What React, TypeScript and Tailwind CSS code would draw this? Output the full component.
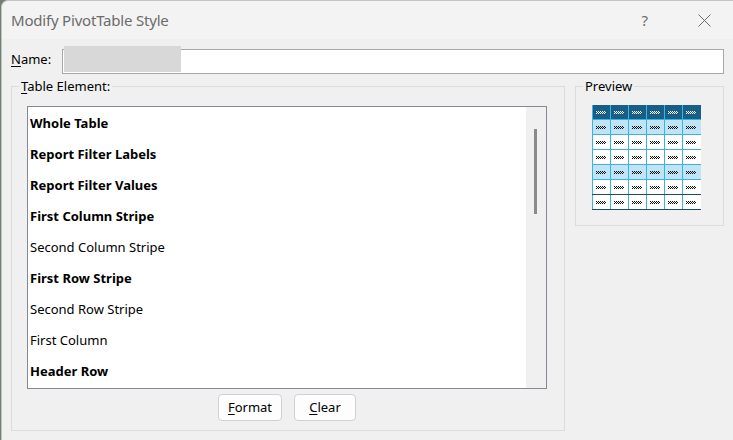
import React from 'react'

const items: { label: string; bold: boolean }[] = [
  { label: 'Whole Table', bold: true },
  { label: 'Report Filter Labels', bold: true },
  { label: 'Report Filter Values', bold: true },
  { label: 'First Column Stripe', bold: true },
  { label: 'Second Column Stripe', bold: false },
  { label: 'First Row Stripe', bold: true },
  { label: 'Second Row Stripe', bold: false },
  { label: 'First Column', bold: false },
  { label: 'Header Row', bold: true },
]

// tiny checkered "text" marks shown in each preview cell
function Squiggle({ color }: { color: string }) {
  const cells = []
  for (let x = 0; x < 10; x++) {
    for (let y = 0; y < 3; y++) {
      if ((x + y) % 2 === 0) cells.push(<rect key={`${x}-${y}`} x={x} y={y} width={1} height={1} fill={color} />)
    }
  }
  return (
    <svg width="10" height="3" viewBox="0 0 10 3" shapeRendering="crispEdges">
      {cells}
    </svg>
  )
}

// row kinds for the preview grid
const rows = ['header', 'stripe', 'plain', 'plain', 'stripe', 'plain', 'plain']

function Preview() {
  return (
    <div className="flex flex-col w-[109px]">
      {rows.map((kind, r) => (
        <div
          key={r}
          className={`flex h-[15px] border-b ${
            kind === 'header' ? 'bg-[#175f86]' : kind === 'stripe' ? 'bg-[#bfe4f5]' : 'bg-white'
          } ${r >= 5 ? 'border-[#1b4e6b]' : 'border-[#3bb2e4]'}`}
        >
          {[0, 1, 2, 3, 4, 5].map(c => (
            <div
              key={c}
              className={`h-full flex items-center pl-[3px] border-l border-[#3bb2e4] ${c === 5 ? 'w-[19px]' : 'w-[18px]'}`}
            >
              <Squiggle color={kind === 'header' ? '#ffffff' : '#111111'} />
            </div>
          ))}
        </div>
      ))}
    </div>
  )
}

export default function App() {
  return (
    <div className="w-[733px] h-[440px] bg-[#6f7f70] overflow-hidden" style={{ fontFamily: '"Noto Sans", "Liberation Sans", sans-serif' }}>
      <div className="ml-px w-[732px] h-[440px] bg-[#f0f0f0] rounded-tl-[7px] border-t border-l border-[#c4c4c4] flex flex-col">
        {/* title bar */}
        <div className="h-[38px] flex items-center pl-[9px] pr-[20px] bg-[#f3f3f3] rounded-tl-[7px]">
          <span className="text-[15px] text-[#6b6b6b] tracking-[-0.2px]">Modify PivotTable Style</span>
          <span className="ml-auto mr-[50px] text-[15px] text-[#6b6b6b]">?</span>
          <svg width="13" height="13" viewBox="0 0 13 13" className="mr-[2px]">
            <path d="M0.5 0.5 L12.5 12.5 M12.5 0.5 L0.5 12.5" stroke="#6b6b6b" strokeWidth="1" />
          </svg>
        </div>

        {/* name row */}
        <div className="flex items-center h-[26px] mt-[9px] pl-[9px] pr-[9px] text-[13px] text-black">
          <span className="w-[51px] -mt-[3px]">
            <span className="underline underline-offset-2">N</span>ame:
          </span>
          <div className="flex-1 h-[25px] bg-white border border-[#a8a8a8] flex items-stretch">
            <div className="w-[117px] ml-px -mt-[4px] h-[26px] bg-[#d8d8d8]" />
          </div>
        </div>

        {/* group boxes */}
        <div className="flex items-start mt-[4px] pl-[9px] pr-[9px] gap-[10px] text-[13px] text-black">
          <fieldset className="w-[554px] h-[353px] border border-[#dcdcdc] p-0">
            <legend className="ml-[7px] px-[2px] leading-[16px]">
              <span className="underline underline-offset-2">T</span>able Element:
            </legend>
            <div className="pl-[15px] pr-[17px] pt-[12px] flex flex-col">
              <div className="h-[283px] border border-[#858995] bg-white flex">
                <div className="flex-1 pt-[1px] pl-[2px]">
                  {items.map(it => (
                    <div key={it.label} className={`h-[31px] flex items-center ${it.bold ? 'font-bold' : ''}`}>
                      {it.label}
                    </div>
                  ))}
                </div>
                <div className="w-[20px] bg-[#f0f0f0] flex justify-center pt-[22px]">
                  <div className="w-[3px] h-[85px] bg-[#8a8a8a] ml-[-1px]" />
                </div>
              </div>
              <div className="flex justify-center gap-[12px] mt-[5px]">
                <button className="w-[64px] h-[27px] rounded-[4px] border border-[#d0d0d0] bg-[#fdfdfd]">
                  <span className="underline underline-offset-2">F</span>ormat
                </button>
                <button className="w-[62px] h-[27px] rounded-[4px] border border-[#d0d0d0] bg-[#fdfdfd]">
                  <span className="underline underline-offset-2">C</span>lear
                </button>
              </div>
            </div>
          </fieldset>

          <fieldset className="w-[149px] h-[148px] border border-[#dcdcdc] p-0">
            <legend className="ml-[7px] px-[2px] leading-[16px]">Preview</legend>
            <div className="pl-[16px] pt-[11px]">
              <Preview />
            </div>
          </fieldset>
        </div>
      </div>
    </div>
  )
}
